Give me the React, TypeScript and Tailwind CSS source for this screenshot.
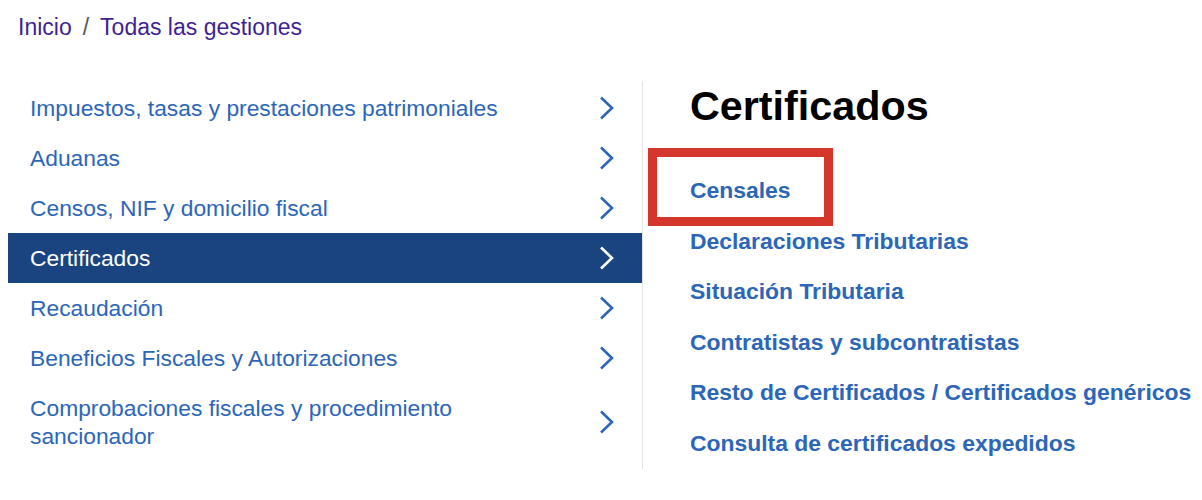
const MENU = [
  'Impuestos, tasas y prestaciones patrimoniales',
  'Aduanas',
  'Censos, NIF y domicilio fiscal',
  'Certificados',
  'Recaudación',
  'Beneficios Fiscales y Autorizaciones',
  'Comprobaciones fiscales y procedimiento sancionador',
]

const LINKS = [
  'Censales',
  'Declaraciones Tributarias',
  'Situación Tributaria',
  'Contratistas y subcontratistas',
  'Resto de Certificados / Certificados genéricos',
  'Consulta de certificados expedidos',
]

function Chevron({ active }: { active: boolean }) {
  return (
    <svg
      width="16"
      height="24"
      viewBox="0 0 16 24"
      className={active ? 'text-white' : 'text-[#2c66b8]'}
      aria-hidden="true"
    >
      <polyline
        points="3,1.5 14,12 3,22.5"
        fill="none"
        stroke="currentColor"
        strokeWidth={2.6}
      />
    </svg>
  )
}

export default function App() {
  return (
    <div className="min-h-[500px] w-[1202px] bg-white font-['Liberation_Sans',Arial,sans-serif]">
      <nav className="flex items-center gap-[11px] pl-[18px] pt-[13px] text-[23px] leading-[28px] text-[#3f1f95]">
        <a>Inicio</a>
        <span className="text-[#555]">/</span>
        <a>Todas las gestiones</a>
      </nav>

      <div className="mt-[42px] flex">
        <ul className="w-[634px] ml-[8px] pb-[8px]">
          {MENU.map((item) => {
            const active = item === 'Certificados'
            return (
              <li
                key={item}
                className={`flex items-center justify-between pl-[22px] pr-[28px] py-[11px] text-[22.8px] leading-[28px] ${
                  active ? 'bg-[#1a4480] text-white' : 'text-[#2c66b8]'
                }`}
              >
                <span className="max-w-[500px]">{item}</span>
                <Chevron active={active} />
              </li>
            )
          })}
        </ul>

        <div className="-mt-[2px] border-l border-[#e3e3e3] pl-[47px]">
          <h1 className="mt-[3px] text-[41.3px] font-bold leading-[44px] text-black">
            Certificados
          </h1>
          <ul className="relative mt-[37px]">
            {LINKS.map((link) => (
              <li
                key={link}
                className="py-[11px] text-[22.9px] font-bold leading-[28.5px] text-[#2c66b8]"
              >
                {link}
              </li>
            ))}
            <div className="pointer-events-none absolute -left-[42px] -top-[17px] h-[78px] w-[185px] border-[9px] border-[#d4362c]" />
          </ul>
        </div>
      </div>
    </div>
  )
}
